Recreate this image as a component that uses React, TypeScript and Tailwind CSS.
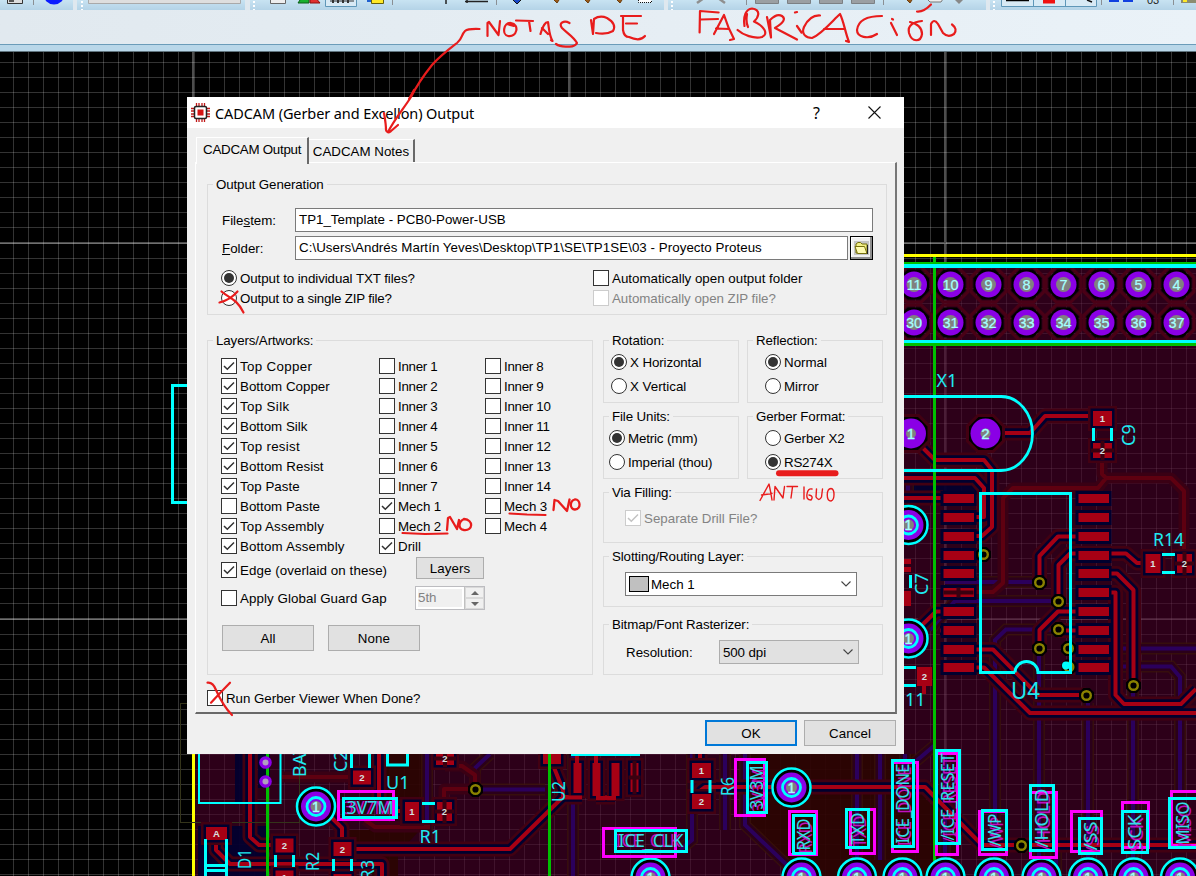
import type { ReactNode } from "react";

const CY = "#00ffff";
const MG = "#ff00ff";
const PURPLE = "#8a00e6";
const RED = "#a60014";
const DIM = "#5e0010";
const BLUE = "#00002e";
const HALO = "#420012";
const BOARD_FONT = "'Noto Sans', 'Open Sans', sans-serif";

/* ---------- board artwork ---------- */

const dimTraces =
  "M1102 459V474L1106 478H1171L1184 491V556M1106 478L1098 488H1013L1003 498V583L993 592H973" +
  "M444 801V789H470M475 785V775L462 766H445M282 777H350M365 820L375 827H430";

const traces =
  "M985 433H1030L1045 416H1093" +
  "M911 436L935 460H984L992 470V527L982 536H970" +
  "M904 478H975L984 488V517H970M904 498H943" +
  "M1039.5 582V556L1058 536.5H1079M1058.5 601V565L1070 553.5H1126L1137 563H1146" +
  "M1105 573.5H1117L1133.5 590V685M1105 592.5H1115.5V695L1124 704H1181L1196 689" +
  "M1039.5 648V630L1058 611.5H1079M1058 630.5H1079M1068 649.5H1079M1069 667.5H1079" +
  "M970 649.5H993L1038 695H1086M970 667.5H984L1030 713H1196" +
  "M970 555.5H983M921 626L936 611.5H943M940 630.5H950" +
  "M250 754V837L259 845H276M216 840V850L230 864H382V876" +
  "M352 849H510L563 797V790L553 765V754M330 816L342 828V842M563 797H582M596 797H615M379 754V800M396 811H405" +
  "M700 754V763M701 800V790L705 787H925L982 845H1196";

function Traces() {
  return (
    <g fill="none" strokeLinejoin="round">
      <path d={dimTraces} stroke="#3a0014" strokeWidth="11" />
      <path d={traces} stroke={HALO} strokeWidth="15" />
      <path d={traces} stroke={BLUE} strokeWidth="9.500" />
      <path d={dimTraces} stroke={DIM} strokeWidth="4" />
      <path d={traces} stroke={RED} strokeWidth="4" />
    </g>
  );
}

function Under({ d }: { d: string }) {
  return (
    <g fill="none">
      <path d={d} stroke="#38120a" strokeWidth="12" strokeOpacity="0.8" />
      <path d={d} stroke="#2b001a" strokeWidth="9" />
      <path d={d} stroke="#2b005c" strokeWidth="4" />
    </g>
  );
}

function octagon(x: number, y: number, r: number) {
  const k = r * 0.42;
  return [
    [x - k, y - r], [x + k, y - r], [x + r, y - k], [x + r, y + k],
    [x + k, y + r], [x - k, y + r], [x - r, y + k], [x - r, y - k],
  ].map((p) => p.join(",")).join(" ");
}

function HeaderPad({ x, y, n }: { x: number; y: number; n: string }) {
  return (
    <g>
      <polygon points={octagon(x, y, 17.5)} fill="none" stroke="#4a0016" strokeWidth="3" />
      <polygon points={octagon(x, y, 15)} fill="#000" />
      <circle cx={x} cy={y} r="13" fill={PURPLE} />
      <circle cx={x} cy={y} r="7.5" fill="#808080" />
      <text x={x} y={y + 5.5} textAnchor="middle" fontSize="14.5" fill="#a5ffff" stroke="#a5ffff" strokeWidth="0.2" fontFamily="Liberation Sans, sans-serif">{n}</text>
    </g>
  );
}

function CrystalPad({ x, n }: { x: number; n: string }) {
  return (
    <g>
      <polygon points={octagon(x, 433.5, 18)} fill="#000" stroke={HALO} strokeWidth="3" />
      <circle cx={x} cy="433.5" r="15" fill={PURPLE} />
      <circle cx={x} cy="433.5" r="5" fill="#808080" />
      <text x={x} y="439" textAnchor="middle" fontSize="15" fill="#a5ffff" stroke="#a5ffff" strokeWidth="0.3" fontFamily="Liberation Sans, sans-serif">{n}</text>
    </g>
  );
}

function TestPoint({ x, y }: { x: number; y: number }) {
  return (
    <g fill="none">
      <circle cx={x} cy={y} r="20" fill="#000" />
      <circle cx={x} cy={y} r="19" stroke={CY} strokeWidth="2.5" />
      <circle cx={x} cy={y} r="15" fill={PURPLE} />
      <circle cx={x} cy={y} r="9" stroke={CY} strokeWidth="2.8" />
      <circle cx={x} cy={y} r="5.5" fill="#808080" />
      <text x={x} y={y + 5} textAnchor="middle" fontSize="14" fill="#a5ffff" stroke="#a5ffff" strokeWidth="0.4" fontFamily="Liberation Sans, sans-serif">1</text>
    </g>
  );
}

function Via({ x, y }: { x: number; y: number }) {
  return (
    <g>
      <polygon points={octagon(x, y, 7.5)} fill="#000" />
      <circle cx={x} cy={y} r="4.3" fill="#000" stroke="#8a8200" strokeWidth="2.4" />
    </g>
  );
}

function SmallPad({ x, y, w, h, n, split = false }: { x: number; y: number; w: number; h: number; n?: string; split?: boolean }) {
  return (
    <g>
      <rect x={x - 5} y={y - 5} width={w + 10} height={h + 10} fill={HALO} />
      <rect x={x - 2.5} y={y - 2.5} width={w + 5} height={h + 5} fill={BLUE} />
      <rect x={x} y={y} width={w} height={h} fill={RED} />
      {split && <path d={`M${x - 2} ${y + h / 2}h${w + 4}M${x + w / 2} ${y - 2}v${h + 4}`} stroke="#3a0010" strokeWidth="4" />}
      {n && <text x={x + w / 2} y={y + h / 2 + 3.5} textAnchor="middle" fontSize="9.5" fontWeight="bold" fill="#d8e0e0" fontFamily="Liberation Sans, sans-serif">{n}</text>}
    </g>
  );
}

function Label({ x, y, children, size = 18, vertical = false, w }: { x: number; y: number; children: string; size?: number; vertical?: boolean; w?: number }) {
  return (
    <text x={x} y={y} fontSize={size} fill="#20e8f0" fontFamily={BOARD_FONT} transform={vertical ? `rotate(-90 ${x} ${y})` : undefined} textLength={w} lengthAdjust="spacingAndGlyphs">
      {children}
    </text>
  );
}

type Box = [number, number, number, number];
const nets: { name: string; m: Box; c: Box; vertical: boolean }[] = [
  { name: "3V7M", m: [338.5, 791.5, 393.5, 819.5], c: [343.5, 798.5, 396.5, 817.5], vertical: false },
  { name: "ICE_CLK", m: [603.5, 828.5, 675.5, 856.5], c: [615.5, 830.5, 686.5, 851.5], vertical: false },
  { name: "3V3M", m: [735.5, 759.5, 764.5, 815.5], c: [747.5, 762.5, 766.5, 812.5], vertical: true },
  { name: "RXD", m: [789.5, 811.5, 816.5, 854.5], c: [793.5, 815.5, 814.5, 853.5], vertical: true },
  { name: "TXD", m: [850.5, 809.5, 874.5, 853.5], c: [846.5, 809.5, 868.5, 847.5], vertical: true },
  { name: "ICE_DONE", m: [892.5, 762.5, 917.5, 851.5], c: [892.5, 760.5, 913.5, 846.5], vertical: true },
  { name: "/ICE_RESET", m: [936.5, 753.5, 957.5, 854.5], c: [936.5, 750.5, 959.5, 843.5], vertical: true },
  { name: "/WP", m: [979.5, 811.5, 1006.5, 854.5], c: [982.5, 810.5, 1006.5, 849.5], vertical: true },
  { name: "/HOLD", m: [1030.5, 792.5, 1056.5, 857.5], c: [1030.5, 785.5, 1053.5, 850.5], vertical: true },
  { name: "/SS", m: [1071.5, 811.5, 1101.5, 851.5], c: [1079.5, 818.5, 1101.5, 853.5], vertical: true },
  { name: "SCK", m: [1122.5, 802.5, 1148.5, 847.5], c: [1122.5, 811.5, 1147.5, 852.5], vertical: true },
  { name: "MISO", m: [1171.5, 791.5, 1200, 845], c: [1169.5, 798.5, 1197, 847.5], vertical: true },
];

function NetTag({ name, m, c, vertical }: { name: string; m: Box; c: Box; vertical: boolean }) {
  const cx = (c[0] + c[2]) / 2;
  const cy = (c[1] + c[3]) / 2;
  const len = (vertical ? c[3] - c[1] : c[2] - c[0]) - 6;
  const rot = vertical ? `rotate(-90 ${cx} ${cy})` : undefined;
  const label = (dx: number, dy: number, fill: string) => (
    <text x={cx + dx} y={cy + 6 + dy} transform={rot} textAnchor="middle" fontSize="18" fill={fill} textLength={len} lengthAdjust="spacingAndGlyphs" fontFamily={BOARD_FONT}>{name}</text>
  );
  return (
    <g fill="none" strokeWidth="3">
      <rect x={m[0]} y={m[1]} width={m[2] - m[0]} height={m[3] - m[1]} stroke={MG} shapeRendering="crispEdges" />
      {label(-3, vertical ? 2 : 0, "#c010c0")}
      <rect x={c[0]} y={c[1]} width={c[2] - c[0]} height={c[3] - c[1]} stroke={CY} shapeRendering="crispEdges" />
      {label(0, 0, "#30e0e8")}
    </g>
  );
}

const minorX = Array.from({ length: 80 }, (_, i) => 193.5 + (i - 12) * 15.04);
const minorY = Array.from({ length: 56 }, (_, i) => 242.5 + (i - 12) * 15.04);
const topPads = [914, 950.5, 988.5, 1026.5, 1063.5, 1101.5, 1138.5, 1176.5];
const pinRows = [498.5, 517.5, 536.5, 555.5, 573.5, 592.5, 611.5, 630.5, 649.5, 667.5];

function Board() {
  return (
    <svg className="absolute inset-0" width="1196" height="876" viewBox="0 0 1196 876" aria-hidden="true">
      <rect width="1196" height="876" fill="#000" />
      <g shapeRendering="crispEdges">
        {minorX.map((x) => <path key={x} d={`M${Math.round(x)}.5 52V876`} stroke="#fff" strokeOpacity="0.2" />)}
        {minorY.map((y) => <path key={y} d={`M0 ${Math.round(y)}.5H1196`} stroke="#fff" strokeOpacity="0.2" />)}
        <path d="M193 52V876M569 52V876M945 52V876M0 243H1196M0 619H1196" stroke="#fff" strokeOpacity="0.3" strokeWidth="2" />
      </g>
      <path d="M193 263H1196V876H193z" fill="#480029" fillOpacity="0.62" />
      <path d="M384 754h42v46h-42zM340 830h80l-14 15H398v31H372V852H340zM745 754h170v34l40 40v48H790l-45-60z" fill="#2c0500" fillOpacity="0.85" />
      <path d="M904 478h74v17h-74zM198 826h68v50h-68zM235 754h15v50h-15zM258 754h12v34h-12z" fill="#000030" fillOpacity="0.9" />

      <Under d="M908 480V510M945 582H1039M930 630L955 601H1058M995 876V640L1006 629.5H1058M1039 648V876M1088 703V876M1133 690V876M1180 790V677L1171 666.5H1075M1075 648.5H1196M1180 700V790" />
      <Under d="M725 754V830M427 754V850M857 754V860M880 754V860M905 754V770M1056 850V876M945 754V876M745 754V825L790 868M915 762L935 745M345 754V760M692 754V840L680 850M573 754V876M480 789.5H545M475 785V768L490 754" />

      <Traces />

      {pinRows.map((y, i) => (
        <g key={y}>
          {[943.5, 1078.5].map((x, side) => (
            <g key={x}>
              <rect x={x - 3} y={y - 7.5} width="36" height="15" fill={BLUE} />
              <rect x={x} y={y - 4.5} width="30.5" height="9" fill={RED} />
              {side === 0 && i === 5 && <path d={`M${x} ${y}h30M${x + 15} ${y - 5}v10`} stroke="#3a0010" strokeWidth="4" />}
            </g>
          ))}
        </g>
      ))}

      {topPads.map((x, i) => <HeaderPad key={x} x={x} y={284.5} n={String(11 - i)} />)}
      {topPads.map((x, i) => <HeaderPad key={x} x={x} y={322.5} n={String(30 + i)} />)}
      <CrystalPad x={911} n="1" />
      <CrystalPad x={985.5} n="2" />

      <g fill="none" shapeRendering="crispEdges">
        <path d="M904 255.5H1196M193.5 754V876" stroke="#ffff00" strokeWidth="3" />
        <path d="M904 263H1196M904 344.5H1196M934.5 257V876" stroke="#00c000" strokeWidth="3" />
        <path d="M904 266H1196" stroke={CY} strokeWidth="4" />
        <path d="M904 341.5H1196M187 385.5H172.5V502.5H187" stroke={CY} strokeWidth="3" />
        <path d="M187 703.5H180.5V822.5H299.5V754" stroke="#34341a" />
      </g>

      <path d="M904 396.5H1001A31.5 37 0 0 1 1001 470.5H904" fill="none" stroke={CY} strokeWidth="2.8" />
      <SmallPad x={1093} y={411} w={19} h={15} n="1" />
      <SmallPad x={1093} y={443} w={19} h={15} n="2" split />
      <SmallPad x={1145.5} y={554} w={15} h={19} n="1" />
      <SmallPad x={1177} y={554} w={15} h={19} n="2" split />
      <path d="M1093.5 428V441M1111.5 428V441M1162 554.5H1175M1162 572.5H1175M904 667.5H916M904 685.5H916M910.5 575V588" stroke={CY} strokeWidth="3" />
      <path d="M904 559h7v5h-7zM904 567h7v5h-7zM904 591h7v15h-7zM917 667h15v19h-15zM922 686h4v8h-4z" fill={RED} />
      <text x="924.5" y="680" textAnchor="middle" fontSize="9.5" fontWeight="bold" fill="#d8e0e0" fontFamily="Liberation Sans, sans-serif">2</text>

      <Via x={983.5} y={554.5} /><Via x={1039.5} y={582.5} /><Via x={1058.5} y={601.5} /><Via x={1058.5} y={629.5} />
      <Via x={1039.5} y={648.5} /><Via x={1068.5} y={648.5} /><Via x={1069} y={667} /><Via x={1133.5} y={685.5} /><Via x={1086.5} y={695.5} />
      <path d="M1015 672.5H980.5V493.5H1070.5V672.5H1038A11.5 11 0 0 0 1015 672.5" fill="none" stroke={CY} strokeWidth="3" />
      <circle cx="1066" cy="665.5" r="4" fill={CY} />
      <TestPoint x={908.5} y={525} /><TestPoint x={908.5} y={638.5} />
      <path d="M934.5 500V660" stroke="#00c000" strokeWidth="3" />
      <Label x={936.5} y={387}>X1</Label>
      <Label x={1135} y={446} vertical>C9</Label>
      <Label x={928} y={595} vertical>C7</Label>
      <Label x={1153} y={546} w={31}>R14</Label>
      <Label x={905} y={706}>11</Label>
      <Label x={1011} y={699} size={24} w={29}>U4</Label>

      {/* lower strip */}
      <SmallPad x={206} y={827} w={21} h={13} n="A" />
      <SmallPad x={275.5} y={838.5} w={18} h={14} n="2" /><SmallPad x={275.5} y={870.5} w={18} h={14} n="1" />
      <SmallPad x={333.5} y={842} w={18} h={14} n="2" /><SmallPad x={333.5} y={874} w={18} h={14} />
      <SmallPad x={353} y={770.5} w={18} h={14} n="2" />
      <SmallPad x={436} y={752} w={18} h={13} n="2" split />
      <SmallPad x={405} y={802} w={14} h={19} n="1" /><SmallPad x={437} y={802} w={15} h={19} n="2" split />
      <SmallPad x={543} y={751} w={18} h={13} />
      <SmallPad x={573.5} y={763} w={8} h={30} /><SmallPad x={592.5} y={763} w={8} h={33} /><SmallPad x={611.5} y={763} w={8} h={33} /><SmallPad x={630.5} y={763} w={8} h={29} split />
      <path d="M577 755V765M596 755V765M563 797.5H582M596 798H616" stroke={RED} strokeWidth="4" />
      <SmallPad x={692} y={763} w={19} h={15} n="1" /><SmallPad x={692} y={794} w={19} h={15} n="2" />
      <g shapeRendering="crispEdges"><path d="M267.5 754V876M549.5 754V876" stroke="#00c000" strokeWidth="3" /></g>
      {[762.5, 781.5].map((y) => (
        <g key={y}><circle cx="265.5" cy={y} r="6.3" fill={PURPLE} /><circle cx="265.5" cy={y} r="3" fill="#b0a0c0" /></g>
      ))}
      <g fill="none" stroke={CY} strokeWidth="2">
        <path d="M199 754V803H280.5V754M571 755H640" />
        <path d="M387.5 754V765H407.5V754M351.5 754V768M369.5 754V768M205.5 839V876M226.5 839V876M205 865.5H227M205 870.5H227M275.5 855V867M293.5 855V867M333.5 859V871M351.5 859V871M422 803.5H435M422 821.5H435M692 780V793M710 780V793" strokeWidth="3" />
      </g>
      <Label x={306} y={777} vertical>BAT</Label>
      <Label x={347} y={772} vertical>C2</Label>
      <Label x={386} y={789}>U1</Label>
      <Label x={419.5} y={843}>R1</Label>
      <Label x={251} y={869} vertical w={20}>D1</Label>
      <Label x={319} y={871} vertical w={19}>R2</Label>
      <Label x={374} y={880} vertical w={20}>R3</Label>
      <Label x={565} y={802} vertical w={21}>U2</Label>
      <Label x={733.5} y={796} vertical w={19}>R6</Label>
      <Via x={475.5} y={789.5} /><Via x={1021.5} y={845.5} />
      <TestPoint x={316} y={806.5} /><TestPoint x={791.5} y={787.5} />
      {[650.5, 801.5, 857, 902.5, 945.5, 994, 1041.5, 1088, 1133.5, 1180].map((x) => <TestPoint key={x} x={x} y={877.5} />)}
      {nets.map((n) => <NetTag key={n.name} {...n} />)}
    </svg>
  );
}

/* ---------- toolbar ---------- */

function Segment({ className, view, children }: { className: string; view: string; children: ReactNode }) {
  return (
    <div className={`h-[10px] overflow-hidden bg-linear-to-b from-[#c8e3f2] to-[#b4d3e7] ${className}`}>
      <svg className="block h-[10px] w-full" viewBox={view} preserveAspectRatio="none">{children}</svg>
    </div>
  );
}

const Sep = ({ x }: { x: number }) => <path d={`M${x}.5 0V5`} stroke="#8a8f94" />;
const Grip = ({ x }: { x: number }) => <path d={`M${x} 1V10`} stroke="#fff" strokeWidth="2" strokeDasharray="2 2" />;

function Toolbar() {
  return (
    <header className="relative flex h-[52px] flex-col bg-[#c5dbe9]">
      <div className="flex h-[10px] gap-1 bg-[#dfe8ef]">
        <Segment className="w-[73px]" view="0 0 73 10">
          <path d="M7.5 -2V3.5H22.5V-2" fill="#ddd" stroke="#333" /><path d="M9 0h5v2H9z" fill="#555" />
          <Sep x={33} /><circle cx="54" cy="-6" r="10.5" fill="#0b1cff" />
        </Segment>
        <Segment className="w-[168px]" view="77 0 168 10">
          <Grip x={82} /><path d="M88.5 -2V3.5H240.5V-2" fill="#dedede" stroke="#a9a9a9" />
        </Segment>
        <Segment className="ml-[1px] w-[414px]" view="250 0 414 10">
          <Grip x={254} />
          <path d="M270.5 -2V3.5H285.5V-2" fill="#eee" stroke="#666" />
          <path d="M298 3L302 -3H309V3z" fill="#18b030" stroke="#0a5c18" /><path d="M310 3V-3H315L320 3z" fill="#e03030" stroke="#8a1010" />
          <path d="M325.5 -2V6.500H356.500V-2" fill="#d8eaf5" stroke="#5f97b8" /><path d="M330 1h24" stroke="#333" strokeWidth="1" /><path d="M332 1.500h20" stroke="#333" strokeWidth="3" strokeDasharray="2 3" />
          <path d="M367 -2h8v4h-8z" fill="#2060d0" /><path d="M371.500 -2V3.500H383.500V-2" fill="#ffe928" stroke="#66600a" />
          <Sep x={392} /><path d="M446 0V4M465 1.500H488M467 0v3" stroke="#222" strokeWidth="1.500" /><Sep x={496} />
          <path d="M512 -1L517 4L522 -1z" fill="#1848c8" stroke="#111" />
          <path d="M553 -1l4 4 2-3M584 -1l4 4 2-3M616 -1l4 4 2-3" fill="#9a5a18" stroke="#6b3d0c" />
          <path d="M638.500 0V2.500H651.500V0" fill="#fff" stroke="#111" strokeDasharray="1 1" />
        </Segment>
        <Segment className="w-[318px]" view="668 0 318 10">
          <Grip x={672} />
          <path d="M697 3L704 -2M725 3L718 -2" stroke="#8f8f8f" strokeWidth="2.500" />
          <Sep x={746} />
          {[755, 787, 819, 851].map((x) => <path key={x} d={`M${x}.5 -2V3.500h23V-2`} fill="#9b9fa3" stroke="#7c8084" />)}
          <Sep x={883} /><path d="M906 -1l4 4 2-3" fill="#9a5a18" stroke="#6b3d0c" />
          <path d="M928 0l2 2h11l2-3" fill="#eee" stroke="#777" /><path d="M955 0l4 4 4-4z" fill="#888" />
        </Segment>
        <Segment className="w-[206px]" view="990 0 206 10">
          <Grip x={994} />
          <path d="M1001.500 -2V6.500H1096.500V-2M1033.500 0V6M1065.500 0V6" fill="#d8eaf5" stroke="#5f97b8" />
          <path d="M1006 .5H1029" stroke="#000" strokeWidth="1.500" /><path d="M1043 0h12v3.500h-12z" fill="#f01010" /><path d="M1087 0l5 2" stroke="#111" strokeWidth="1.500" />
          <Sep x={1101} /><path d="M1109 0h10v2h-10zM1123 0h10v2h-10z" fill="#1040e0" />
          <text x="1147" y="4" fontSize="11" fill="#222" fontFamily="Liberation Sans, sans-serif">03</text>
          <Sep x={1173} /><path d="M1181 0h15v3h-15z" fill="#8c8c70" /><path d="M1183 0h4v2h-4z" fill="#ffe928" />
        </Segment>
      </div>
      <div className="h-[34px] bg-linear-to-r from-[#e1e9ef] to-[#eaf2f8]" />
      <div className="h-[8px] border-t border-b border-t-[#6b9cb9] border-b-[#61757f] bg-[#b9d7e9]" />
    </header>
  );
}

/* ---------- dialog controls ---------- */

function Check({ label, on = false, off = false, className = "h-5" }: { label: string; on?: boolean; off?: boolean; className?: string }) {
  return (
    <label className={`flex items-center gap-[3px] whitespace-nowrap ${off ? "text-[#838383]" : ""} ${className}`}>
      <span className={`flex size-4 shrink-0 items-center justify-center border bg-white ${off ? "border-[#cccccc]" : "border-[#333333]"}`}>
        {on && (
          <svg width="12" height="10" viewBox="0 0 12 10" fill="none">
            <path d="M1 5L4.300 8.300L11 1.500" stroke={off ? "#c3c3c3" : "#333"} strokeWidth="1.500" />
          </svg>
        )}
      </span>
      <span className="pt-[2px]">{label}</span>
    </label>
  );
}

function Radio({ label, on = false, className = "h-6" }: { label: string; on?: boolean; className?: string }) {
  return (
    <label className={`flex items-center gap-[3px] whitespace-nowrap ${className}`}>
      <span className="flex size-4 shrink-0 items-center justify-center rounded-full border border-[#333333] bg-white">
        {on && <span className="size-[10px] rounded-full bg-[#333333]" />}
      </span>
      <span className="pt-[2px]">{label}</span>
    </label>
  );
}

function Group({ title, className, children }: { title: string; className: string; children: ReactNode }) {
  return (
    <section className={`border border-[#dcdcdc] ${className}`}>
      <h2 className="-mt-[8px] ml-[5px] h-4 w-fit bg-[#f0f0f0] px-[3px] leading-4 tracking-[-0.12px] whitespace-nowrap">{title}</h2>
      {children}
    </section>
  );
}

function Button({ className, children }: { className: string; children: ReactNode }) {
  return <button className={`flex items-center justify-center bg-[#e1e1e1] pt-[2px] tracking-[0.1px] ${className}`}>{children}</button>;
}

const Chevron = () => (
  <svg width="10" height="6" viewBox="0 0 10 6" fill="none"><path d="M.5 .5L5 5L9.500 .5" stroke="#444" strokeWidth="1.100" /></svg>
);

const layers: { name: string; on: boolean; spacing: string }[] = [
  { name: "Top Copper", on: true, spacing: "h-5 tracking-[0.35px]" },
  { name: "Bottom Copper", on: true, spacing: "h-5" },
  { name: "Top Silk", on: true, spacing: "h-5 tracking-[0.35px]" },
  { name: "Bottom Silk", on: true, spacing: "h-5" },
  { name: "Top resist", on: true, spacing: "h-5 tracking-[0.3px]" },
  { name: "Bottom Resist", on: true, spacing: "h-5 tracking-[0.05px]" },
  { name: "Top Paste", on: true, spacing: "h-5 tracking-[0.05px]" },
  { name: "Bottom Paste", on: false, spacing: "h-5" },
  { name: "Top Assembly", on: true, spacing: "h-5 tracking-[0.15px]" },
  { name: "Bottom Assembly", on: true, spacing: "h-5 tracking-[0.1px]" },
];

function Dialog() {
  return (
    <div role="dialog" className="absolute top-[97px] left-[187px] flex h-[657px] w-[717px] flex-col bg-[#f0f0f0] text-[13.33px] leading-4 text-black">
      <div className="flex h-[31px] shrink-0 items-center bg-white">
        <svg className="ml-[4px]" width="19" height="19" viewBox="0 0 19 19">
          <path d="M5.500 0V19M8 0V19M11 0V19M13.500 0V19M0 5.500H19M0 8H19M0 11H19M0 13.500H19" stroke="#c01818" strokeWidth="1.300" />
          <rect x="3.500" y="3.500" width="12" height="12" rx="1.500" fill="#fff" stroke="#222" strokeWidth="1.500" />
          <rect x="6.500" y="6.500" width="6" height="6" fill="#d41414" />
        </svg>
        <h1 className="ml-[5px] w-[580px] font-['Noto_Sans'] text-[14.5px] tracking-[-0.1px] whitespace-nowrap">CADCAM (Gerber and Excellon) Output</h1>
        <span className="ml-[18px] w-[10px] font-['Noto_Sans'] text-[16px]">?</span>
        <svg className="ml-[45px]" width="13" height="13" viewBox="0 0 13 13"><path d="M.5 .5L12.500 12.500M12.500 .5L.5 12.500" stroke="#111" strokeWidth="1.100" /></svg>
      </div>

      <div className="flex h-[34px] shrink-0 items-end pl-[9px]">
        <div className="z-10 -mb-[2px] flex h-[27px] w-[113px] border-t border-r-2 border-l border-t-white border-r-[#696969] border-l-white bg-[#f0f0f0] pt-[4px] pl-[6px] tracking-[-0.25px] whitespace-nowrap">CADCAM Output</div>
        <div className="flex h-[23px] w-[106px] justify-center border-t border-r-2 border-t-white border-r-[#696969] pt-[4px] whitespace-nowrap">CADCAM Notes</div>
      </div>

      <div className="ml-[8px] h-[552px] w-[702px] shrink-0 border-t border-r-2 border-b-2 border-l border-t-white border-r-[#777777] border-b-[#696969] border-l-white pl-[11px]">
        <Group title="Output Generation" className="mt-[21px] h-[131px] w-[680px]">
          <div className="mt-[15px] flex h-6 items-center pl-[14px]">
            <span className="w-[73px] pt-[2px]">File<u>s</u>tem:</span>
            <div className="flex h-6 w-[578px] items-center border border-[#7a7a7a] bg-white pl-[3px] whitespace-nowrap">TP1_Template - PCB0-Power-USB</div>
          </div>
          <div className="mt-1 flex h-6 items-center pl-[14px]">
            <span className="w-[73px] pt-[2px]"><u>F</u>older:</span>
            <div className="flex h-6 w-[553px] items-center border border-[#7a7a7a] bg-white pl-[3px] tracking-[0.05px] whitespace-nowrap">C:\Users\Andrés Martín Yeves\Desktop\TP1\SE\TP1SE\03 - Proyecto Proteus</div>
            <div className="ml-[2px] flex h-6 w-[23px] items-center justify-center border border-black bg-[#f0f0f0] shadow-[inset_-2px_-2px_0_#8d8d8d,inset_1px_1px_0_#fff]">
              <svg width="15" height="14" viewBox="0 0 15 14">
                <rect width="15" height="14" fill="#c4c4c4" />
                <path d="M2 12V3L4 1.500H6.500L8 3H13V12z" fill="#f2ef85" stroke="#77710c" />
                <path d="M1 5.500H10.500L13 12.500H3.500z" fill="#fffbb0" stroke="#77710c" /><path d="M13.500 4V13" stroke="#222" />
              </svg>
            </div>
          </div>
          <div className="mt-2 flex pl-[13px]">
            <div className="w-[372px]">
              <Radio className="h-5 tracking-[-0.08px]" label="Output to individual TXT files?" on />
              <Radio className="h-5 tracking-[-0.18px]" label="Output to a single ZIP file?" />
            </div>
            <div>
              <Check label="Automatically open output folder" />
              <Check className="h-5 tracking-[-0.04px]" label="Automatically open ZIP file?" off />
            </div>
          </div>
        </Group>

        <div className="mt-[25px] flex gap-[10px]">
          <Group title="Layers/Artworks:" className="h-[335px] w-[386px]">
            <div className="mt-[7px] flex pl-[13px]">
              <div className="w-[158px]">{layers.map((l) => <Check key={l.name} className={l.spacing} label={l.name} on={l.on} />)}</div>
              <div className="w-[106px]">
                {[1, 2, 3, 4, 5, 6, 7].map((n) => <Check key={n} className="h-5 tracking-[-0.3px]" label={`Inner ${n}`} />)}
                <Check className="h-5 tracking-[-0.1px]" label="Mech 1" on /><Check className="h-5 tracking-[-0.1px]" label="Mech 2" /><Check label="Drill" on />
              </div>
              <div>
                {[8, 9, 10, 11, 12, 13, 14].map((n) => <Check key={n} className="h-5 tracking-[-0.3px]" label={`Inner ${n}`} />)}
                <Check className="h-5 tracking-[-0.1px]" label="Mech 3" /><Check className="h-5 tracking-[-0.1px]" label="Mech 4" />
              </div>
            </div>
            <div className="flex h-7 items-center pl-[13px]">
              <Check className="w-[195px] tracking-[0.08px]" label="Edge (overlaid on these)" on />
              <Button className="mb-[4px] h-[22px] w-[68px] border border-[#adadad]">Layers</Button>
            </div>
            <div className="flex h-7 items-center pl-[13px]">
              <Check className="w-[194px] tracking-[0.07px]" label="Apply Global Guard Gap" />
              <div className="flex h-6 w-[70px] border border-[#bcbcc0] bg-[#f0f0f0]">
                <span className="w-[48px] border-2 border-white pt-[1px] text-[#838383]">5th</span>
                <span className="flex flex-1 flex-col border-l border-[#c0c0c0]">
                  <i className="flex flex-1 items-center justify-center border border-[#d9d9d9]"><svg width="8" height="4"><path d="M0 4L4 0L8 4z" fill="#666" /></svg></i>
                  <i className="flex flex-1 items-center justify-center border border-[#d9d9d9]"><svg width="8" height="4"><path d="M0 0L4 4L8 0z" fill="#666" /></svg></i>
                </span>
              </div>
            </div>
            <div className="mt-[13px] flex gap-[14px] pl-[14px]">
              <Button className="h-[26px] w-[92px] border border-[#adadad]">All</Button>
              <Button className="h-[26px] w-[92px] border border-[#adadad]">None</Button>
            </div>
          </Group>

          <div className="w-[280px]">
            <div className="grid grid-cols-[136px_136px] gap-x-2 gap-y-[13px]">
              <Group title="Rotation:" className="h-[63px]">
                <div className="pt-[1px] pl-[7px]"><Radio className="h-6 tracking-[-0.1px]" label="X Horizontal" on /><Radio label="X Vertical" /></div>
              </Group>
              <Group title="Reflection:" className="h-[63px]">
                <div className="pt-[1px] pl-[17px]"><Radio label="Normal" on /><Radio label="Mirror" /></div>
              </Group>
              <Group title="File Units:" className="h-[63px]">
                <div className="pt-[1px] pl-[5px]"><Radio className="h-6 tracking-[-0.15px]" label="Metric (mm)" on /><Radio className="h-6 tracking-[-0.1px]" label="Imperial (thou)" /></div>
              </Group>
              <Group title="Gerber Format:" className="h-[63px]">
                <div className="pt-[1px] pl-[17px]"><Radio className="h-6 tracking-[-0.1px]" label="Gerber X2" /><Radio className="h-6 tracking-[-0.2px]" label="RS274X" on /></div>
              </Group>
            </div>
            <Group title="Via Filling:" className="mt-[13px] h-[51px]">
              <Check className="h-[34px] pl-[21px]" label="Separate Drill File?" on off />
            </Group>
            <Group title="Slotting/Routing Layer:" className="mt-[13px] h-[51px]">
              <div className="mt-[7px] ml-[21px] flex h-6 w-[232px] items-center border border-[#7a7a7a] bg-white pr-[5px] pl-[3px]">
                <span className="h-4 w-[20px] border border-black bg-[#c0c0c0]" />
                <span className="ml-[2px] flex-1 pt-[2px]">Mech 1</span><Chevron />
              </div>
            </Group>
            <Group title="Bitmap/Font Rasterizer:" className="mt-[17px] h-[51px]">
              <div className="mt-[7px] flex items-center pl-[22px]">
                <span className="w-[93px] pt-[2px]">Resolution:</span>
                <div className="flex h-6 w-[140px] items-center border border-[#adadad] bg-[#e1e1e1] pr-[5px] pl-[3px]">
                  <span className="flex-1 pt-[2px] tracking-[-0.1px]">500 dpi</span><Chevron />
                </div>
              </div>
            </Group>
          </div>
        </div>
        <Check className="mt-[15px] h-4 tracking-[-0.03px]" label="Run Gerber Viewer When Done?" />
      </div>

      <div className="mt-[6px] flex justify-end gap-[7px] pr-[8px]">
        <Button className="h-[26px] w-[92px] border-2 border-[#0078d7]">OK</Button>
        <Button className="h-[26px] w-[92px] border border-[#adadad]">Cancel</Button>
      </div>
    </div>
  );
}

/* ---------- freehand notes ---------- */

function Notes() {
  return (
    <svg className="pointer-events-none absolute inset-0" width="1196" height="876" viewBox="0 0 1196 876" fill="none" stroke="#e81c1c" strokeWidth="2.200" strokeLinecap="round" strokeLinejoin="round" aria-hidden="true">
      <path d="M479.500 29Q468 28.500 465 31C461 35 463 38 457 43C448 50 440 56 432 65C424 75 416 87 411 97C404 108 394 120 388 132M414 90L409 99M384 113C385 119 386 124 386 130Q387 134 391 131L398 125" />
      <path d="M487.500 36V23L489 22L498.500 35L500 21M511 23C503 22 502 35 508 36C517 38 520 24 511 23M507 24L514 26M516 20.500L533 21M529 21L530.500 31M540.500 34C542 28 545 22 548 22C549 28 549 35 552.500 41L551 40M542 28L548 34M569.500 23C564 20 558 23 562 28C567 33 574 37 577 43Q575 47 568 46.500Q560 47 556 44" />
      <path d="M591 20L593 34L594 19Q600 15 607 18Q617 24 613 31Q606 35 596 33M621 16H641M626 23.500H637M623 17V30Q624 37 629 37Q640 42 645 36" />
      <path d="M699.600 32.500L700 11L718.600 12.500M701 19.500L718 19M714 34L724 15Q728 28 734 39L730 40M716 28.500L729 29" />
      <path d="M747 14C746 20 747 25 748 27M744.500 26C743 16 746 9 752 8.500C762 10 758 18 754 21.500C764 26 769 34 762 37C754 39 743 35 737.600 30M767 17L771 37.500L770 20Q777 13 782 16Q788 20 775 28L797 39.500M797 26L801.500 32.500M795 12.500L797 12" />
      <path d="M820 15.500C812 15 807 21 804 27C801 34 806 38 812 38C822 34 834 19 840 14C844 22 845 32 849 42L846 41M824 29H845M882 16C866 16 858 21 857 30C857 37 868 40 877 34M891 23L897 35M892 19L893 19.500M922 21C914 22 907 25 909 33C912 43 921 42 922 34C922 28 918 24 910 22M917 11.500Q924 12 931 4.500M931 35V24Q934 18 938 24L943 33Q948 38 954 34Q958 29 952 24.500" />
      <path d="M219.500 302.500Q230 300 237.500 291.500M221.500 291.500C229 298 237 299 243.500 312.500" />
      <path d="M509.500 513.500L527 514.500L545.500 515M402.500 533L425 534L447.500 533.500" />
      <path d="M553.500 510L554.500 500L558 501L567 511L569.500 499.500M575 499.500C569 501 570 510 575 509.500C582 509 580 499 575 499.500M447 530L448 518L450 517L457 529L459 520M464 519C458 522 458 529 464 530C473 531 474 520 464 519" strokeWidth="2.300" />
      <path d="M207.500 682.700Q213 682 216 690C220 699 226 709 232 715M230 682.700Q219 694 211 702.700" />
      <path d="M779 473.300H835.500" strokeWidth="6" />
      <path d="M760 500.500L769 484Q771 493 772 500M761.500 495L772 493.500M774 500L775 486.500L783 498L784.500 486.500M787 486.500H797.500M792.500 487L791 498M804 487V499M812 489Q808 488 807 494Q806 500 811 500Q814 496 809 495M816.500 489L816 497Q819 502 821.500 497L822.500 489M831 488.500C826 489 826 501 831 501C835 500 835 489 831 488.500" strokeWidth="1.400" />
    </svg>
  );
}

export default function App() {
  return (
    <main className="relative h-[876px] w-[1196px] overflow-hidden bg-black font-['Liberation_Sans',Arial,sans-serif]">
      <Board />
      <Toolbar />
      <Dialog />
      <Notes />
    </main>
  );
}
